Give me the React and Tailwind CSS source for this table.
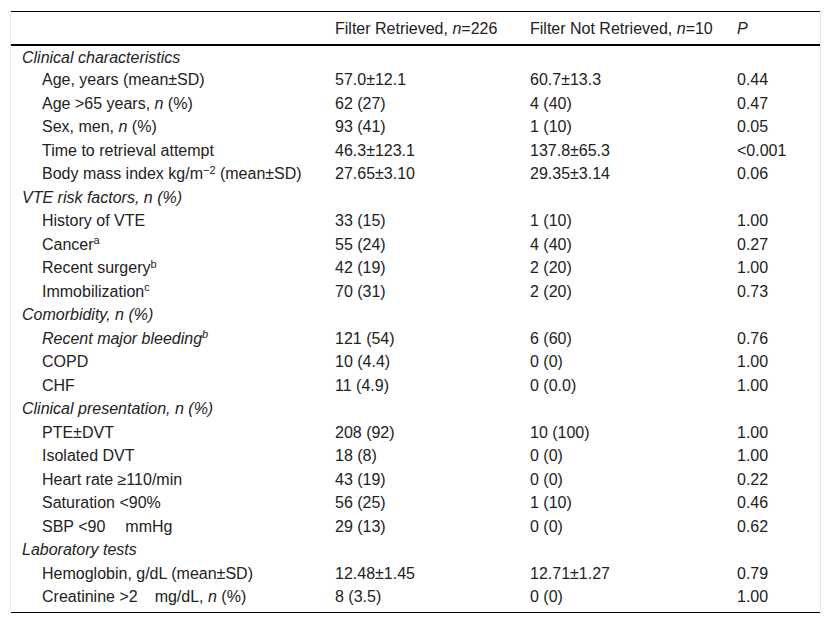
import React from "react";

const I = ({ children }) => <i>{children}</i>;
const Sup = ({ children }) => <sup className="text-[11px]">{children}</sup>;
const Gap = ({ w }) => <span className={w} />;

const rows = [
  { s: "Clinical characteristics" },
  { l: "Age, years (mean±SD)", a: "57.0±12.1", b: "60.7±13.3", p: "0.44" },
  { l: <>Age &gt;65 years, <I>n</I> (%)</>, a: "62 (27)", b: "4 (40)", p: "0.47" },
  { l: <>Sex, men, <I>n</I> (%)</>, a: "93 (41)", b: "1 (10)", p: "0.05" },
  { l: "Time to retrieval attempt", a: "46.3±123.1", b: "137.8±65.3", p: "<0.001" },
  { l: <>Body mass index kg/m<Sup>−2</Sup> (mean±SD)</>, a: "27.65±3.10", b: "29.35±3.14", p: "0.06" },
  { s: "VTE risk factors, n (%)" },
  { l: "History of VTE", a: "33 (15)", b: "1 (10)", p: "1.00" },
  { l: <>Cancer<Sup>a</Sup></>, a: "55 (24)", b: "4 (40)", p: "0.27" },
  { l: <>Recent surgery<Sup>b</Sup></>, a: "42 (19)", b: "2 (20)", p: "1.00" },
  { l: <>Immobilization<Sup>c</Sup></>, a: "70 (31)", b: "2 (20)", p: "0.73" },
  { s: "Comorbidity, n (%)" },
  { l: <I>Recent major bleeding<Sup>b</Sup></I>, a: "121 (54)", b: "6 (60)", p: "0.76" },
  { l: "COPD", a: "10 (4.4)", b: "0 (0)", p: "1.00" },
  { l: "CHF", a: "11 (4.9)", b: "0 (0.0)", p: "1.00" },
  { s: "Clinical presentation, n (%)" },
  { l: "PTE±DVT", a: "208 (92)", b: "10 (100)", p: "1.00" },
  { l: "Isolated DVT", a: "18 (8)", b: "0 (0)", p: "1.00" },
  { l: "Heart rate ≥110/min", a: "43 (19)", b: "0 (0)", p: "0.22" },
  { l: "Saturation <90%", a: "56 (25)", b: "1 (10)", p: "0.46" },
  { l: <>SBP &lt;90<Gap w="inline-block w-[20px]" />mmHg</>, a: "29 (13)", b: "0 (0)", p: "0.62" },
  { s: "Laboratory tests" },
  { l: "Hemoglobin, g/dL (mean±SD)", a: "12.48±1.45", b: "12.71±1.27", p: "0.79" },
  { l: <>Creatinine &gt;2<Gap w="inline-block w-[17px]" />mg/dL, <I>n</I> (%)</>, a: "8 (3.5)", b: "0 (0)", p: "1.00" },
];

export default function App() {
  return (
    <div className="bg-white min-h-screen pt-[10px] pl-[10px] font-['Liberation_Sans',Arial,sans-serif] text-[16px] leading-[20px] text-[#222]">
      <div className="w-[811px] border-x border-[#e8e8e8] pt-px">
        <table className="w-full table-fixed border-collapse">
          <colgroup>
            <col className="w-[313px]" />
            <col className="w-[195px]" />
            <col className="w-[207px]" />
            <col />
          </colgroup>
          <thead>
            <tr className="h-[33px]">
              <th className="border-t border-b-2 border-black font-normal text-left pl-[11px] pt-[2px]"></th>
              <th className="border-t border-b-2 border-black font-normal text-left pl-[11px] pt-[2px] whitespace-nowrap">
                Filter Retrieved, <I>n</I>=226
              </th>
              <th className="border-t border-b-2 border-black font-normal text-left pl-[11px] pt-[2px] whitespace-nowrap">
                Filter Not Retrieved, <I>n</I>=10
              </th>
              <th className="border-t border-b-2 border-black font-normal text-left pl-[11px] pt-[2px]">
                <I>P</I>
              </th>
            </tr>
          </thead>
          <tbody className="border-b border-black">
            {rows.map((r, i) => {
              const last = i === rows.length - 1;
              const first = i === 0;
              const h = last ? "h-[26.5px]" : first ? "h-[24px]" : "h-[23.5px]";
              const pad = last ? "pb-[3px]" : first ? "pt-[1px]" : "";
              return r.s ? (
                <tr key={i} className={h}>
                  <td colSpan={4} className={`pl-[11px] italic whitespace-nowrap ${pad}`}>
                    {r.s}
                  </td>
                </tr>
              ) : (
                <tr key={i} className={h}>
                  <td className={`pl-[31px] whitespace-nowrap ${pad}`}>{r.l}</td>
                  <td className={`pl-[11px] whitespace-nowrap ${pad}`}>{r.a}</td>
                  <td className={`pl-[11px] whitespace-nowrap ${pad}`}>{r.b}</td>
                  <td className={`pl-[11px] whitespace-nowrap ${pad}`}>{r.p}</td>
                </tr>
              );
            })}
          </tbody>
        </table>
      </div>
    </div>
  );
}
